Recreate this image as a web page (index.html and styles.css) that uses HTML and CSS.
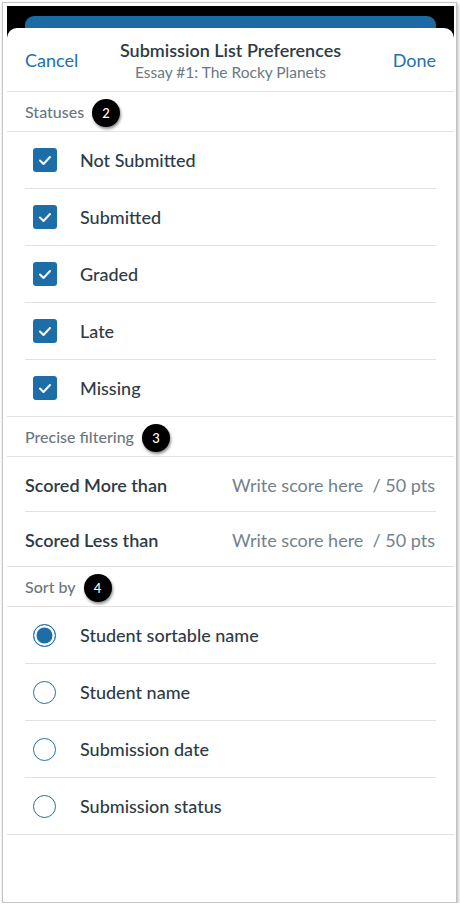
FILE: index.html
```html
<!DOCTYPE html>
<html lang="en">

<head>
    <meta charset="UTF-8" />
    <meta name="viewport" content="width=device-width, initial-scale=1.0" />
    <title>Submission List Preferences</title>
    <link rel="stylesheet" href="styles.css">
</head>

<body>
    <div class="frame">
        <div class="phone">
            <div class="card-behind"></div>
            <div class="sheet">
                <div class="sheet-header">
                    <a class="nav-btn">Cancel</a>
                    <div class="titles">
                        <div class="title">Submission List Preferences</div>
                        <div class="subtitle">Essay #1: The Rocky Planets</div>
                    </div>
                    <a class="nav-btn done">Done</a>
                </div>

                <div class="section">
                    <div class="section-title">Statuses <span class="badge">2</span></div>
                    <ul class="options">
                        <li><span class="checkbox"><svg viewBox="0 0 24 24" width="24" height="24"><path d="M7 12.5l3.5 3.5 6.5-7" /></svg></span>Not Submitted</li>
                        <li><span class="checkbox"><svg viewBox="0 0 24 24" width="24" height="24"><path d="M7 12.5l3.5 3.5 6.5-7" /></svg></span>Submitted</li>
                        <li><span class="checkbox"><svg viewBox="0 0 24 24" width="24" height="24"><path d="M7 12.5l3.5 3.5 6.5-7" /></svg></span>Graded</li>
                        <li><span class="checkbox"><svg viewBox="0 0 24 24" width="24" height="24"><path d="M7 12.5l3.5 3.5 6.5-7" /></svg></span>Late</li>
                        <li><span class="checkbox"><svg viewBox="0 0 24 24" width="24" height="24"><path d="M7 12.5l3.5 3.5 6.5-7" /></svg></span>Missing</li>
                    </ul>
                </div>

                <div class="section">
                    <div class="section-title">Precise filtering <span class="badge">3</span></div>
                    <ul class="options scores">
                        <li><span class="score-label">Scored More than</span><span class="score-input">Write score here&nbsp;&nbsp;/ 50 pts</span></li>
                        <li><span class="score-label">Scored Less than</span><span class="score-input">Write score here&nbsp;&nbsp;/ 50 pts</span></li>
                    </ul>
                </div>

                <div class="section">
                    <div class="section-title">Sort by <span class="badge">4</span></div>
                    <ul class="options">
                        <li><span class="radio selected"></span>Student sortable name</li>
                        <li><span class="radio"></span>Student name</li>
                        <li><span class="radio"></span>Submission date</li>
                        <li><span class="radio"></span>Submission status</li>
                    </ul>
                </div>
            </div>
        </div>
    </div>
</body>

</html>
```

FILE: styles.css
```css
* {
    box-sizing: border-box;
}

body {
    margin: 0;
    background: #fff;
    font-family: Lato, "Open Sans", sans-serif;
    color: #2d3b45;
}

.frame {
    margin: 2px 0 0 2px;
    width: 455px;
    height: 901px;
    border: 1px solid #c4c4c4;
    padding: 3px 2px 3px 4px;
    background: #fff;
    box-shadow: 1px 2px 3px rgba(0, 0, 0, 0.3);
}

.phone {
    height: 100%;
    background: #000;
    padding-top: 10px;
    display: flex;
    flex-direction: column;
}

.card-behind {
    height: 12px;
    margin: 0 18px;
    background: #1c6aa3;
    border-radius: 9px 9px 0 0;
}

.sheet {
    flex: 1;
    background: #fff;
    border-radius: 10px 10px 0 0;
}

.sheet-header {
    height: 64px;
    display: grid;
    grid-template-columns: 1fr auto 1fr;
    align-items: center;
    padding: 0 18px;
    border-bottom: 1px solid #e2e2e2;
}

.nav-btn {
    color: #2270ad;
    font-size: 18px;
    padding-top: 1px;
}

.nav-btn.done {
    justify-self: end;
}

.titles {
    text-align: center;
    padding-top: 2px;
}

.title {
    font-size: 18px;
    font-weight: 600;
    line-height: 23px;
}

.subtitle {
    font-size: 15.5px;
    color: #6b7780;
    line-height: 20px;
}

.section {
    border-bottom: 1px solid #e2e2e2;
}

.section-title {
    height: 40px;
    display: flex;
    align-items: center;
    padding: 0 18px;
    font-size: 16px;
    font-weight: 500;
    color: #6b7780;
    border-bottom: 1px solid #e2e2e2;
}

.badge {
    width: 28px;
    height: 28px;
    margin-left: 8px;
    margin-top: 2px;
    border-radius: 50%;
    background: #000;
    color: #fff;
    font-size: 13px;
    display: flex;
    align-items: center;
    justify-content: center;
    box-shadow: 1px 2px 3px rgba(0, 0, 0, 0.45);
}

.options {
    list-style: none;
    margin: 0;
    padding: 0;
}

.options li {
    height: 57px;
    margin: 0 18px;
    display: flex;
    align-items: center;
    font-size: 18px;
    font-weight: 500;
    border-bottom: 1px solid #e2e2e2;
}

.options li:last-child {
    border-bottom: none;
    height: 56px;
}

.scores li {
    height: 55px;
    justify-content: space-between;
    padding-top: 2px;
}

.scores li:last-child {
    height: 54px;
}

.score-label {
    font-weight: 600;
}

.score-input {
    color: #73818c;
    font-weight: 400;
    margin-right: 1px;
}

.checkbox {
    width: 24px;
    height: 24px;
    margin: 0 23px 0 8px;
    border-radius: 3px;
    background: #1d6ea8;
    flex-shrink: 0;
}

.checkbox svg {
    display: block;
    fill: none;
    stroke: #fff;
    stroke-width: 2;
    stroke-linecap: round;
    stroke-linejoin: round;
}

.radio {
    width: 23px;
    height: 23px;
    margin: 0 24px 0 8px;
    border: 1.5px solid #2270ad;
    border-radius: 50%;
    flex-shrink: 0;
}

.radio.selected {
    background: #1d6ea8;
    box-shadow: inset 0 0 0 2.5px #fff;
}
```
